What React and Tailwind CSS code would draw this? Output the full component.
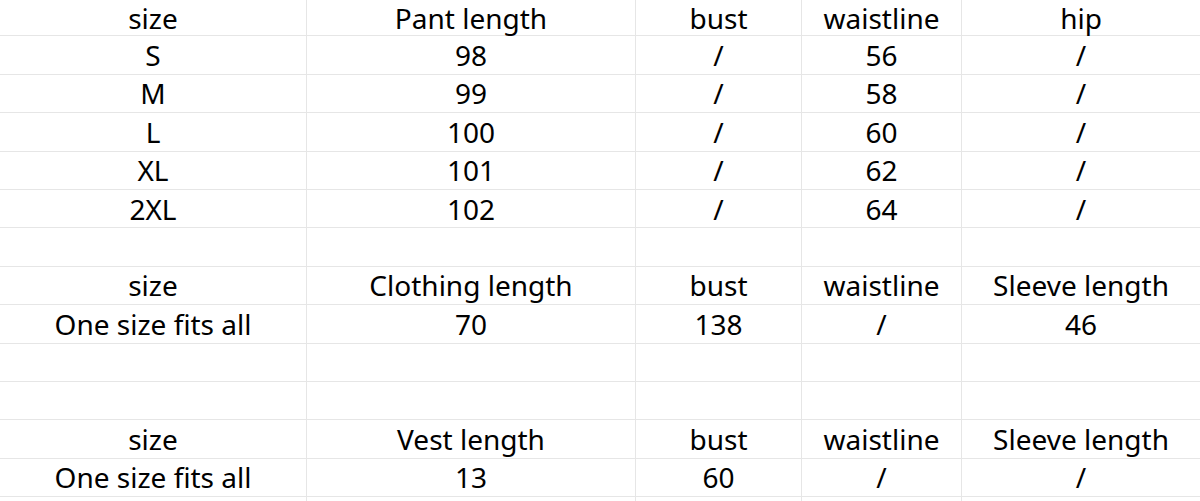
import React from "react";

const rows = [
  ["size", "Pant length", "bust", "waistline", "hip"],
  ["S", "98", "/", "56", "/"],
  ["M", "99", "/", "58", "/"],
  ["L", "100", "/", "60", "/"],
  ["XL", "101", "/", "62", "/"],
  ["2XL", "102", "/", "64", "/"],
  ["", "", "", "", ""],
  ["size", "Clothing length", "bust", "waistline", "Sleeve length"],
  ["One size fits all", "70", "138", "/", "46"],
  ["", "", "", "", ""],
  ["", "", "", "", ""],
  ["size", "Vest length", "bust", "waistline", "Sleeve length"],
  ["One size fits all", "13", "60", "/", "/"],
  ["", "", "", "", ""],
];

export default function App() {
  return (
    <div
      className="w-[1200px] h-[501px] overflow-hidden bg-white text-black"
      style={{ fontFamily: '"Noto Sans", "Open Sans", sans-serif' }}
    >
      <div className="grid grid-cols-[307px_329px_166px_160px_238px]">
        {rows.map((r, i) =>
          r.map((c, j) => (
            <div
              key={i + "-" + j}
              className={
                (i === 0 ? "h-[36.4px] " : "h-[38.4px] ") +
                "flex items-center justify-center border-b border-[#e6e6e6] text-[28px] leading-none whitespace-nowrap " +
                (j < 4 ? "border-r" : "")
              }
            >
              {c}
            </div>
          ))
        )}
      </div>
    </div>
  );
}
